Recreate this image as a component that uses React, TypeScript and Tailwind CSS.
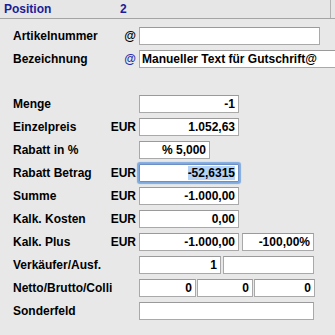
type RowProps = {
  label: string;
  unit?: string;
  unitBlue?: boolean;
  className?: string;
  children: React.ReactNode;
};

function Row({ label, unit, unitBlue, className = 'mt-[5px]', children }: RowProps) {
  return (
    <div className={`flex items-center h-[18px] pl-[13px] ${className}`}>
      <div className="w-[95px] shrink-0 whitespace-nowrap">{label}</div>
      <div
        className={`w-[28px] shrink-0 text-right ${unitBlue ? 'text-[#2a2fa8]' : 'text-black'}`}
      >
        {unit}
      </div>
      <div className="ml-[3px] flex items-center">{children}</div>
    </div>
  );
}

function Field({
  value = '',
  width,
  left = false,
}: {
  value?: string;
  width: string;
  left?: boolean;
}) {
  return (
    <div
      className={`${width} h-[18px] shrink-0 bg-white border border-[#a9a9a9] border-t-[#9a9a9a] leading-[16px] whitespace-nowrap overflow-hidden ${
        left ? 'text-left pl-[2px]' : 'text-right pr-[3px]'
      }`}
    >
      {value}
    </div>
  );
}

export default function App() {
  return (
    <div className="w-[335px] h-[335px] overflow-hidden bg-[#e8e8e8] text-black text-[12px] font-bold font-['Liberation_Sans',Arial,sans-serif]">
      <div className="h-[19px] border-b border-[#a4a4a4] bg-[#e6e6e6] flex">
        <div className="w-[331px] border-r border-[#b0b0b0] flex items-center text-[#1c1c96]">
          <span className="pl-[4px] w-[120px]">Position</span>
          <span>2</span>
        </div>
      </div>

      <Row label="Artikelnummer" unit="@" className="mt-[8px]">
        <Field width="w-[181px]" />
      </Row>
      <Row label="Bezeichnung" unit="@" unitBlue>
        <Field width="w-[210px]" left value="Manueller Text für Gutschrift@" />
      </Row>

      <Row label="Menge" className="mt-[27px]">
        <Field width="w-[100px]" value="-1" />
      </Row>
      <Row label="Einzelpreis" unit="EUR">
        <Field width="w-[100px]" value="1.052,63" />
      </Row>
      <Row label="Rabatt in %">
        <Field width="w-[71px]" value="% 5,000" />
      </Row>
      <Row label="Rabatt Betrag" unit="EUR">
        <div className="w-[100px] h-[18px] bg-white border border-[#6f8fc4] rounded-[1px] shadow-[0_0_1px_2px_#7eaae0] leading-[16px] text-right pr-[3px] whitespace-nowrap">
          <span className="bg-[#b5d3f6]">-52,6315</span>
        </div>
      </Row>
      <Row label="Summe" unit="EUR">
        <Field width="w-[100px]" value="-1.000,00" />
      </Row>
      <Row label="Kalk. Kosten" unit="EUR">
        <Field width="w-[100px]" value="0,00" />
      </Row>
      <Row label="Kalk. Plus" unit="EUR">
        <Field width="w-[100px]" value="-1.000,00" />
        <div className="ml-[3px]">
          <Field width="w-[72px]" value="-100,00%" />
        </div>
      </Row>
      <Row label="Verkäufer/Ausf.">
        <Field width="w-[82px]" value="1" />
        <div className="ml-[2px]">
          <Field width="w-[91px]" />
        </div>
      </Row>
      <Row label="Netto/Brutto/Colli">
        <Field width="w-[57px]" value="0" />
        <div className="ml-[1px]">
          <Field width="w-[56px]" value="0" />
        </div>
        <div className="ml-[1px]">
          <Field width="w-[61px]" value="0" />
        </div>
      </Row>
      <Row label="Sonderfeld">
        <Field width="w-[175px]" />
      </Row>
    </div>
  );
}
